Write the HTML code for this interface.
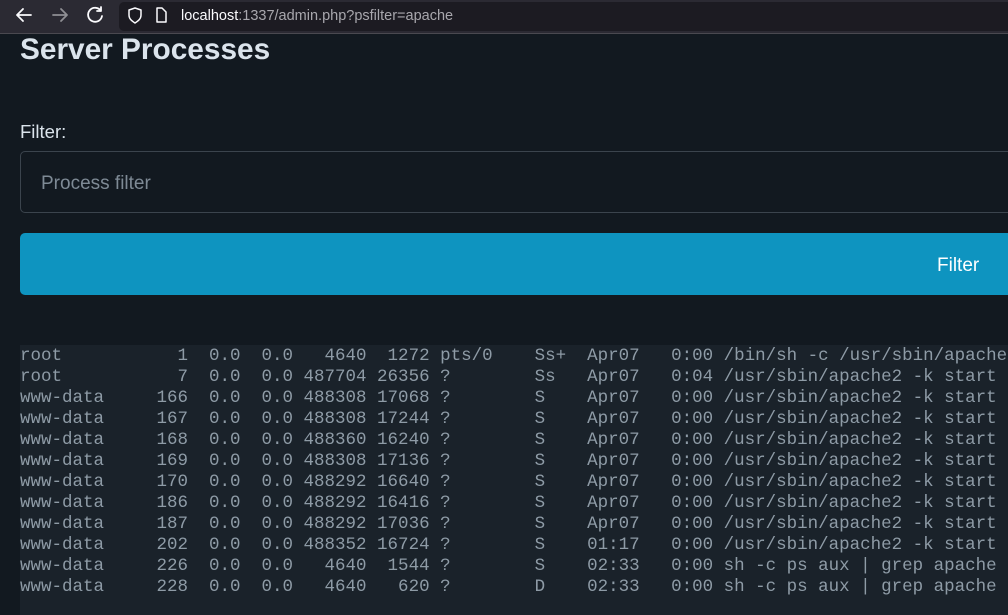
<!DOCTYPE html>
<html><head><style>
*{margin:0;padding:0;box-sizing:border-box}
body{width:1008px;height:610px;overflow:hidden;background:#121920;font-family:"Liberation Sans",sans-serif;position:relative}
.bar{position:absolute;left:0;top:0;width:1008px;height:34px;background:#2b2a33;border-bottom:1px solid #4a4950}
.url{position:absolute;left:119px;top:2px;width:900px;height:29px;background:#1c1b22;border-radius:5px}
.urltext{position:absolute;left:181px;top:8px;font-size:14.5px;color:#a8a7ad;white-space:nowrap}
.urltext b{font-weight:normal;color:#fbfbfe}
h1{position:absolute;left:20px;top:33px;font-size:29.8px;font-weight:bold;color:#dbe4ec}
.lbl{position:absolute;left:20px;top:121px;font-size:18.5px;color:#dbe4ec}
.inp{position:absolute;left:20px;top:151px;width:1010px;height:62px;border:1px solid #3b444d;border-radius:5px}
.inp span{position:absolute;left:20px;top:21px;font-size:19px;color:#7e8a95}
.btn{position:absolute;left:20px;top:233px;width:1010px;height:62px;background:#0e94c0;border-radius:5px}
.btn span{position:absolute;left:917px;top:22px;font-size:19px;color:#fff}
pre{position:absolute;left:20px;top:345px;width:1000px;height:270px;background:#1a222a;font-family:"Liberation Mono",monospace;font-size:17.5px;line-height:21px;color:#8e9ba6;padding-top:1px;overflow:hidden}
</style></head><body>
<div class="bar">
<svg width="110" height="34" style="position:absolute;left:0;top:0" fill="none" stroke-width="1.8" stroke-linecap="round" stroke-linejoin="round">
<path d="M31 15H17M23 9l-6 6 6 6" stroke="#fbfbfe"/>
<path d="M53 15h14M61 9l6 6-6 6" stroke="#8f8f94"/>
<path d="M101 11a7 7 0 1 0 1 5M101 7v4h-4" stroke="#fbfbfe"/>
</svg>
<div class="url"></div>
<svg width="60" height="34" style="position:absolute;left:120px;top:0" fill="none" stroke="#fbfbfe" stroke-width="1.5" stroke-linejoin="round">
<path d="M15 8l6 2v5c0 4-3 6-6 8-3-2-6-4-6-8v-5z"/>
<path d="M37 8h5l4 4v10h-9z"/>
</svg>
<div class="urltext"><b>localhost</b>:1337/admin.php?psfilter=apache</div>
</div>
<h1>Server Processes</h1>
<div class="lbl">Filter:</div>
<div class="inp"><span>Process filter</span></div>
<div class="btn"><span>Filter</span></div>
<pre>root           1  0.0  0.0   4640  1272 pts/0    Ss+  Apr07   0:00 /bin/sh -c /usr/sbin/apache2
root           7  0.0  0.0 487704 26356 ?        Ss   Apr07   0:04 /usr/sbin/apache2 -k start
www-data     166  0.0  0.0 488308 17068 ?        S    Apr07   0:00 /usr/sbin/apache2 -k start
www-data     167  0.0  0.0 488308 17244 ?        S    Apr07   0:00 /usr/sbin/apache2 -k start
www-data     168  0.0  0.0 488360 16240 ?        S    Apr07   0:00 /usr/sbin/apache2 -k start
www-data     169  0.0  0.0 488308 17136 ?        S    Apr07   0:00 /usr/sbin/apache2 -k start
www-data     170  0.0  0.0 488292 16640 ?        S    Apr07   0:00 /usr/sbin/apache2 -k start
www-data     186  0.0  0.0 488292 16416 ?        S    Apr07   0:00 /usr/sbin/apache2 -k start
www-data     187  0.0  0.0 488292 17036 ?        S    Apr07   0:00 /usr/sbin/apache2 -k start
www-data     202  0.0  0.0 488352 16724 ?        S    01:17   0:00 /usr/sbin/apache2 -k start
www-data     226  0.0  0.0   4640  1544 ?        S    02:33   0:00 sh -c ps aux | grep apache
www-data     228  0.0  0.0   4640   620 ?        D    02:33   0:00 sh -c ps aux | grep apache</pre>
</body></html>
